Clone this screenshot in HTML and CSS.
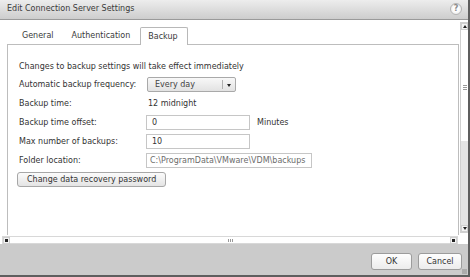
FILE: index.html
```html
<!DOCTYPE html>
<html lang="en">
<head>
    <meta charset="UTF-8">
    <title>Edit Connection Server Settings</title>
    <link rel="stylesheet" href="styles.css">
</head>
<body>
    <div class="window">
        <div class="titlebar">
            <span class="title">Edit Connection Server Settings</span>
            <span class="help">?</span>
        </div>

        <div class="body">
            <div class="left">
                <div class="viewport">
                    <div class="tabs">
                        <div class="tab">General</div>
                        <div class="tab">Authentication</div>
                        <div class="tab active">Backup</div>
                    </div>
                    <div class="panel">
                        <p class="note">Changes to backup settings will take effect immediately</p>
                        <div class="form">
                            <div class="label">Automatic backup frequency:</div>
                            <div class="field">
                                <div class="select">
                                    <span class="select-value">Every day</span>
                                    <span class="select-arrow"></span>
                                </div>
                            </div>

                            <div class="label">Backup time:</div>
                            <div class="field"><span class="value">12 midnight</span></div>

                            <div class="label">Backup time offset:</div>
                            <div class="field">
                                <div class="input">0</div>
                                <span class="unit">Minutes</span>
                            </div>

                            <div class="label">Max number of backups:</div>
                            <div class="field"><div class="input">10</div></div>

                            <div class="label">Folder location:</div>
                            <div class="field"><div class="input wide muted">C:\ProgramData\VMware\VDM\backups</div></div>
                        </div>
                        <button class="button">Change data recovery password</button>
                    </div>
                </div>
                <div class="hscroll">
                    <span class="arrow-box"><span class="dot"></span></span>
                    <span class="hthumb"><span class="grip-v"></span></span>
                    <span class="arrow-box"><span class="dot"></span></span>
                </div>
            </div>
            <div class="right">
                <div class="vscroll">
                    <span class="arrow-box up"><span class="tri-up"></span></span>
                    <span class="vthumb"><span class="grip-h"></span></span>
                    <span class="vtrack"></span>
                    <span class="arrow-box down"><span class="tri-down"></span></span>
                </div>
            </div>
        </div>

        <div class="footer">
            <button class="button footer-btn ok">OK</button>
            <button class="button footer-btn">Cancel</button>
            <span class="resize"></span>
        </div>
    </div>
</body>
</html>
```

FILE: styles.css
```css
* {
    margin: 0;
    padding: 0;
    box-sizing: border-box;
}

body {
    font-family: 'DejaVu Sans', 'Liberation Sans', sans-serif;
    font-size: 8px;
    color: #333;
    background: #fff;
}

.window {
    width: 470px;
    height: 277px;
    display: flex;
    flex-direction: column;
    border-right: 2px solid #5e5e5e;
    border-bottom: 2px solid #5e5e5e;
    position: relative;
    overflow: hidden;
}

/* title bar */

.titlebar {
    height: 20px;
    flex: none;
    display: flex;
    align-items: center;
    justify-content: space-between;
    padding: 0 6px 2px 7px;
    background: linear-gradient(#ededed, #cdcdcd);
    border-bottom: 1px solid #9a9a9a;
    color: #3a3a3a;
}

.help {
    width: 12px;
    height: 12px;
    border-radius: 50%;
    border: 1px solid #b4b4b4;
    background: radial-gradient(#fdfdfd 40%, #dedede);
    color: #8a8a8a;
    font-size: 8px;
    font-weight: bold;
    display: flex;
    align-items: center;
    justify-content: center;
    line-height: 1;
}

/* main area */

.body {
    height: 224px;
    flex: none;
    display: flex;
}

.left {
    width: 460px;
    display: flex;
    flex-direction: column;
}

.viewport {
    height: 215px;
    overflow: hidden;
    padding-top: 7px;
}

.tabs {
    display: flex;
    padding-left: 13px;
    height: 17px;
    position: relative;
    z-index: 1;
}

.tab {
    padding: 0 9px;
    display: flex;
    align-items: center;
    color: #3a3a3a;
}

.tab.active {
    margin-left: 1px;
    padding: 0 9px 0 7px;
    background: #fff;
    border: 1px solid #b8b8b8;
    border-bottom: none;
    border-radius: 2px 2px 0 0;
    height: 18px;
}

.panel {
    margin: 0 1px 0 7px;
    height: 260px;
    border: 1px solid #bdbdbd;
    padding: 14px 0 0 11px;
}

.note {
    height: 16px;
    line-height: 16px;
}

.form {
    display: grid;
    grid-template-columns: 128px auto;
    grid-auto-rows: 19px;
}

.label,
.field {
    display: flex;
    align-items: center;
}

.field {
    gap: 7px;
}

.value {
    padding-left: 1px;
}

.select {
    width: 89px;
    height: 15px;
    margin-top: -1px;
    display: flex;
    border: 1px solid #a9a9a9;
    border-radius: 2px;
    background: linear-gradient(#f8f8f8, #e2e2e2);
}

.select-value {
    flex: 1;
    padding-left: 7px;
    line-height: 13px;
    color: #444;
}

.select-arrow {
    width: 13px;
    border-left: 1px solid #b0b0b0;
    margin: 2px 0;
    position: relative;
}

.select-arrow::after {
    content: '';
    position: absolute;
    left: 4px;
    top: 4px;
    border-left: 2.5px solid transparent;
    border-right: 2.5px solid transparent;
    border-top: 3px solid #222;
}

.input {
    width: 104px;
    height: 15px;
    border: 1px solid #c6c6c6;
    background: #fff;
    padding-left: 5px;
    line-height: 13px;
    margin-left: -1px;
}

.input.wide {
    width: 166px;
    padding-left: 3px;
}

.input.muted {
    color: #6c6c6c;
}

.button {
    font-family: inherit;
    font-size: 8px;
    color: #333;
    height: 15px;
    padding: 0 10px;
    white-space: nowrap;
    border: 1px solid #a7a7a7;
    border-radius: 3px;
    background: linear-gradient(#fbfbfb, #e4e4e4);
}

.panel .button {
    margin: 2px 0 0 -2px;
    padding: 0 9px;
}

/* scrollbars */

.arrow-box {
    width: 7px;
    height: 7px;
    flex: none;
    display: flex;
    align-items: center;
    justify-content: center;
    background: #f4f4f4;
    border: 1px solid #cfcfcf;
}

.dot {
    width: 3px;
    height: 3px;
    background: #222;
}

.tri-up,
.tri-down {
    border-left: 2px solid transparent;
    border-right: 2px solid transparent;
}

.tri-up {
    border-bottom: 3px solid #222;
}

.tri-down {
    border-top: 3px solid #222;
}

.hscroll {
    margin: 1px 2px 0 2px;
    height: 8px;
    display: flex;
    border: 1px solid #d8d8d8;
    background: #fff;
}

.hthumb {
    flex: 1;
    display: flex;
    align-items: center;
    justify-content: center;
}

.grip-v {
    width: 5px;
    height: 3px;
    border-left: 1px solid #999;
    border-right: 1px solid #999;
    position: relative;
}

.grip-v::after {
    content: '';
    position: absolute;
    left: 1px;
    top: 0;
    width: 1px;
    height: 3px;
    background: #999;
}

.right {
    width: 8px;
    padding-top: 2px;
}

.vscroll {
    height: 211px;
    display: flex;
    flex-direction: column;
    border: 1px solid #d0d0d0;
    border-right: none;
    background: #fff;
}

.vthumb {
    height: 111px;
    display: flex;
    align-items: center;
    justify-content: center;
    padding-top: 4px;
}

.grip-h {
    width: 4px;
    height: 5px;
    border-top: 1px solid #999;
    border-bottom: 1px solid #999;
    position: relative;
}

.grip-h::after {
    content: '';
    position: absolute;
    left: 0;
    top: 1px;
    width: 4px;
    height: 1px;
    background: #999;
}

.vtrack {
    flex: 1;
    background: #e4e4e4;
}

/* footer */

.footer {
    flex: 1;
    background: #cbcbcb;
    display: flex;
    justify-content: flex-end;
    align-items: flex-start;
    gap: 6px;
    padding: 9px 6px 0 0;
    position: relative;
}

.footer-btn {
    height: 17px;
    padding: 0;
    width: 44px;
    border-color: #9c9c9c;
    background: linear-gradient(#fefefe, #ececec);
}

.footer-btn.ok {
    width: 41px;
}

.resize {
    position: absolute;
    right: 1px;
    bottom: 1px;
    width: 5px;
    height: 5px;
    background: radial-gradient(circle, #888 0.6px, transparent 0.8px) 0 0 / 2px 2px;
}
```
